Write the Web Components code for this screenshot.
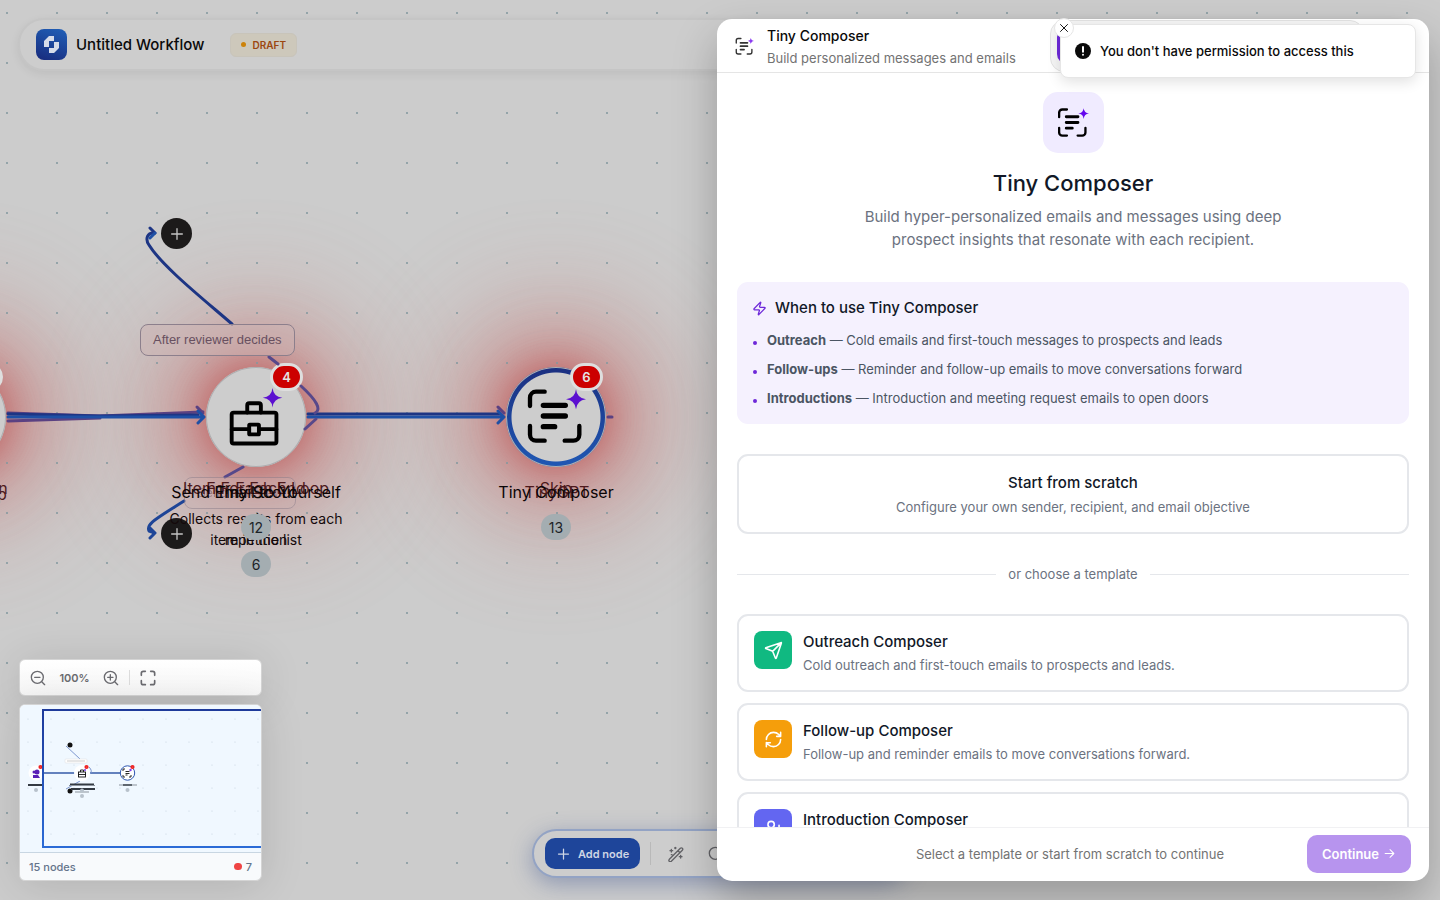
<!DOCTYPE html>
<html lang="en">
<head>
<meta charset="utf-8">
<title>Untitled Workflow</title>
<style>
    body {
        margin: 0;
        font-family: Inter, "Liberation Sans", sans-serif;
        color: #0a0a0a;
        background: #cccccc;
    }
</style>
</head>
<body>
<app-shell>
    <workflow-canvas></workflow-canvas>
    <workflow-header>Untitled Workflow<span slot="status">DRAFT</span></workflow-header>
    <canvas-overview></canvas-overview>
    <node-toolbar></node-toolbar>
    <composer-panel>
        <span slot="title">Tiny Composer</span>
        <span slot="subtitle">Build personalized messages and emails</span>
        <composer-intro></composer-intro>
        <usage-box>
            <usage-item><b>Outreach</b> — Cold emails and first-touch messages to prospects and leads</usage-item>
            <usage-item><b>Follow-ups</b> — Reminder and follow-up emails to move conversations forward</usage-item>
            <usage-item><b>Introductions</b> — Introduction and meeting request emails to open doors</usage-item>
        </usage-box>
        <scratch-card></scratch-card>
        <text-divider>or choose a template</text-divider>
        <template-list>
            <template-card icon="send" style="--tile: #10b981">Outreach Composer<span slot="text">Cold outreach and first-touch emails to prospects and leads.</span></template-card>
            <template-card icon="refresh" style="--tile: #f59e0b">Follow-up Composer<span slot="text">Follow-up and reminder emails to move conversations forward.</span></template-card>
            <template-card icon="user-plus" style="--tile: #6366f1">Introduction Composer<span slot="text">Introduction and meeting request emails.</span></template-card>
        </template-list>
    </composer-panel>
    <toast-message>You don't have permission to access this</toast-message>
</app-shell>

<script>
const star = (x, y, r) => `<path fill="var(--star, #5b0fd0)" stroke="none" d="M${x} ${y - r}q${r * .1} ${r * .9} ${r} ${r}q${-r * .9} ${r * .1} ${-r} ${r}q${-r * .1} ${-r * .9} ${-r} ${-r}q${r * .9} ${-r * .1} ${r} ${-r}z"/>`;

// name: [viewBox, stroke width, markup]
const icons = {
    compose: ['0 0 180 170', 13, `<path d="M12 52V27a18 18 0 0 1 18-18h26M12 112v26a18 18 0 0 0 18 18h26M116 156h26a18 18 0 0 0 18-18v-26"/><path stroke-width="16" d="M52 50h66M52 82h66M52 114h34"/>${star(150, 32, 30)}`],
    briefcase: ['0 0 170 185', 12, `<rect x="10" y="79" width="138" height="95" rx="6"/><path d="M58 79V56q0-6 6-6h30q6 0 6 6v23M10 130h54M94 130h54"/><rect x="64" y="116" width="30" height="30" rx="2"/>${star(136, 33, 30)}`],
    plus: ['0 0 24 24', 2, '<path d="M4 12h16M12 4v16"/>'],
    close: ['0 0 24 24', 2, '<path d="M5 5l14 14M19 5L5 19"/>'],
    arrow: ['0 0 24 24', 2, '<path d="M4 12h16M13 5l7 7-7 7"/>'],
    bolt: ['0 0 24 24', 2, '<path d="M4 14a1 1 0 0 1-.8-1.6l9.9-10.2a.5.5 0 0 1 .9.5l-1.9 6A1 1 0 0 0 13 10h7a1 1 0 0 1 .8 1.6l-9.9 10.2a.5.5 0 0 1-.9-.5l1.9-6A1 1 0 0 0 11 14z"/>'],
    send: ['0 0 24 24', 2, '<path d="M14.5 21.7a.5.5 0 0 0 .9 0l6.5-19a.5.5 0 0 0-.6-.6l-19 6.5a.5.5 0 0 0 0 .9l8 3.2a2 2 0 0 1 1 1.1zM21.9 2.1l-11 11"/>'],
    refresh: ['0 0 24 24', 2, '<path d="M3 12a9 9 0 0 1 9-9 9.75 9.75 0 0 1 6.74 2.74L21 8M21 3v5h-5M21 12a9 9 0 0 1-9 9 9.75 9.75 0 0 1-6.74-2.74L3 16M8 16H3v5"/>'],
    'user-plus': ['0 0 24 24', 2, '<path d="M16 21v-2a4 4 0 0 0-4-4H6a4 4 0 0 0-4 4v2M19 8v6M22 11h-6"/><circle cx="9" cy="7" r="4"/>'],
    'zoom-out': ['0 0 24 24', 2, '<circle cx="11" cy="11" r="9"/><path d="M22 22l-4-4M7 11h8"/>'],
    'zoom-in': ['0 0 24 24', 2, '<circle cx="11" cy="11" r="9"/><path d="M22 22l-4-4M7 11h8M11 7v8"/>'],
    fit: ['0 0 24 24', 2.5, '<path d="M2 8V5a3 3 0 0 1 3-3h3M16 2h3a3 3 0 0 1 3 3v3M22 16v3a3 3 0 0 1-3 3h-3M8 22H5a3 3 0 0 1-3-3v-3"/>'],
    wand: ['0 0 24 24', 2, '<path d="M2 20L18.5 3.500q1.500-1.500 3 0t0 3L5 23q-1.500 1-3 0t0-3zM15 7l3 3M5 5v4M3 7h4M11 2v2M10 3h2M19 14v4M17 16h4M5 13h1"/>'],
    search: ['0 0 24 24', 2, '<circle cx="11" cy="11" r="9"/><path d="M22 22l-4-4"/>'],
    alert: ['0 0 24 24', 3, '<circle cx="12" cy="12" r="12" fill="currentColor" stroke="none"/><path stroke="#fff" d="M12 6v7M12 17.5v.1"/>'],
};

function define(name, html, setup) {
    const template = document.createElement('template');
    template.innerHTML = html;
    customElements.define(name, class extends HTMLElement {
        constructor() {
            super();
            this.attachShadow({ mode: 'open' }).appendChild(template.content.cloneNode(true));
        }
        connectedCallback() {
            if (setup) setup(this, this.shadowRoot);
        }
    });
}

define('ui-icon', `
<style>
    :host { display: block; flex: none; width: 16px; height: 16px; }
    svg { display: block; width: 100%; height: 100%; }
</style>
<svg fill="none" stroke="currentColor" stroke-linecap="round" stroke-linejoin="round" aria-hidden="true"></svg>
`, (el, root) => {
    const [box, width, markup] = icons[el.getAttribute('name')];
    const svg = root.querySelector('svg');
    svg.setAttribute('viewBox', box);
    svg.setAttribute('stroke-width', width);
    svg.innerHTML = markup;
});

// every layer shares one grid cell
define('app-shell', `
<style>
    :host { display: grid; grid-template: minmax(0, 1fr) / minmax(0, 1fr); height: 100vh; overflow: hidden; position: relative; }
    ::slotted(*) { grid-area: 1 / 1; }
</style>
<slot></slot>
`);

define('workflow-header', `
<style>
    :host {
        display: flex; align-items: center; align-self: start; position: relative;
        box-sizing: border-box; height: 53px; margin: 18px; padding: 0 16px;
        border: 2px solid #c5c5c5; border-radius: 26px; background: #cdcdcd;
        box-shadow: 0 3px 10px rgba(0, 0, 0, .07);
        font-size: 15px; font-weight: 500;
    }
    .logo {
        display: grid; place-items: center; width: 31px; height: 31px; margin-right: 9px;
        border-radius: 8px; background: linear-gradient(20deg, #182a7c, #2060b8);
    }
    .status {
        display: flex; align-items: center; gap: 6px; margin-left: 26px; padding: 0 10px; height: 22px;
        border: 1px solid #c8c4ba; border-radius: 6px; background: #cdc8bb; color: #9c4711; font-size: 10px; font-weight: 600;
    }
    i { width: 5px; height: 5px; border-radius: 50%; background: #cc820a; }
</style>
<div class="logo">
    <svg width="15" height="17" viewBox="0 0 15 17" fill="#d6dcea"><path d="M5 0h5v5H5v6H0V5zM10 6h5v6l-5 5H5v-5h5z"/></svg>
</div>
<slot></slot>
<div class="status"><i></i><slot name="status"></slot></div>
`);

define('flow-node', `
<style>
    :host {
        position: absolute; display: grid; place-items: center;
        width: 100px; height: 100px; border-radius: 50%; background: #cdcdcd; color: #000;
        box-shadow: inset 0 0 0 1px #aeaeb0, 0 0 30px 6px rgba(185, 60, 60, .4), 0 0 60px 34px rgba(195, 70, 70, .32), 0 0 90px 82px rgba(200, 110, 105, .24);
    }
    :host([selected]) { background: radial-gradient(circle closest-side, #cdcdcd 88%, transparent 90%), linear-gradient(#1b2f80, #1f58b4); }
    .badge {
        position: absolute; left: 64px; top: -4px; display: grid; place-items: center; box-sizing: border-box;
        width: 33px; height: 28px; border: 3px solid #dedede; border-radius: 14px;
        background: #cc0000; color: #e4e4e4; font-size: 13px; font-weight: 600;
    }
</style>
<div class="icon"></div>
<div class="badge"><slot></slot></div>
`, (el, root) => {
    root.querySelector('.icon').innerHTML = `<ui-icon name="${el.getAttribute('icon')}" style="width: 60px; height: 60px"></ui-icon>`;
});

define('workflow-canvas', `
<style>
    :host { display: block; position: relative; overflow: hidden; background: #cccccc; }
    .dots, .edges { position: absolute; left: 0; top: 0; width: 100%; height: 100%; }
    .name, .note, .count { position: absolute; white-space: nowrap; transform: translate(-50%, -50%); }
    .name { font-size: 16px; color: #0a0506; }
    .note { font-size: 14px; color: #14090b; text-align: center; line-height: 21px; }
    .under { color: #4d191c; }
    .count { display: grid; place-items: center; width: 30px; height: 26px; border-radius: 13px; background: #a4adb1; color: #1d2328; font-size: 14px; }
    .add {
        position: absolute; display: grid; place-items: center; width: 31px; height: 31px; padding: 0;
        border: 0; border-radius: 50%; background: #1c1a1a; color: #c4c4c4;
    }
    .branch {
        position: absolute; box-sizing: border-box; height: 32px; padding: 0 12px;
        border: 1px solid #8c7f8c; border-radius: 8px; background: rgba(204, 180, 180, .5);
        color: #685060; font: 13px/30px "Liberation Sans", sans-serif; white-space: nowrap;
    }
    .faded { opacity: .5; }
</style>
<flow-node icon="compose" style="left: -94px; top: 367px"></flow-node>
<flow-node icon="briefcase" style="left: 206px; top: 367px">4</flow-node>
<flow-node icon="compose" selected style="left: 506px; top: 367px">6</flow-node>
<svg class="dots">
    <!-- the second row of circles is skipped where a node covers the grid -->
    <pattern id="dots" width="50" height="50" patternUnits="userSpaceOnUse"><circle cx="7" cy="13" r="1" fill="#82979e"/></pattern>
    <mask id="free"><rect width="100%" height="100%" fill="#fff"/><circle cx="-44" cy="417" r="51"/><circle cx="256" cy="417" r="51"/><circle cx="556" cy="417" r="51"/></mask>
    <rect width="100%" height="100%" fill="url(#dots)" mask="url(#free)"/>
</svg>
<svg class="edges" fill="none" stroke-width="3" stroke-linecap="round" stroke-linejoin="round">
    <path stroke="#5a4182" d="M8 421L100 418M8 413l92 3 103-4M197 407l6 6"/>
    <path stroke="#1d3584" d="M8 414l90 2 100-1M308 414h192"/>
    <path stroke="#1e50a5" d="M8 417h194M198 411l6 6-6 6M308 417h194M498 411l6 6-6 6"/>
    <path stroke="#5a4182" d="M498 407l6 6M608 417h4"/>
    <path stroke="#1d3584" d="M155 233c-8-1-10 6-6 12 13 21 53 53 83 79M150 228l5 5"/>
    <path stroke="#1e50a5" d="M155 233l-5 5"/>
    <path stroke="#57488a" d="M269 357l9 7M301 386q24 22 14 27M316 419l-11 10M243 467l-18 10"/>
    <path stroke="#1e4597" d="M184 501c-30 19-38 23-35 30l6 2M150 528l5 5-5 5"/>
</svg>
<span class="branch" style="left: 140px; top: 324px">After reviewer decides</span>
<span class="branch faded" style="left: 184px; top: 477px">Send to review</span>
<span class="name under" style="left: 256px; top: 488px">Item For Each Loop</span>
<span class="name under" style="left: 256px; top: 488px">For Each End</span>
<span class="name" style="left: 256px; top: 492px">Tiny Scout</span>
<span class="name" style="left: 256px; top: 492px">Send Email to Yourself</span>
<button class="add" aria-label="Add after approval" style="left: 161px; top: 218px"><ui-icon name="plus"></ui-icon></button>
<button class="add" aria-label="Add after rejection" style="left: 161px; top: 518px"><ui-icon name="plus"></ui-icon></button>
<span class="note" style="left: 256px; top: 529px">Collects results from each<br>item in the list</span>
<span class="note" style="left: 256px; top: 539px">repetition</span>
<span class="count" style="left: 256px; top: 527px">12</span>
<span class="count" style="left: 256px; top: 564px">6</span>
<span class="name under" style="left: 556px; top: 488px">Skip</span>
<span class="name under" style="left: 557px; top: 492px">TinyGPT</span>
<span class="name" style="left: 556px; top: 492px">Tiny Composer</span>
<span class="count" style="left: 556px; top: 527px">13</span>
<span class="name under" style="left: 3px; top: 488px">n</span>
<span class="name under" style="left: 2px; top: 494px">p</span>
`);

define('canvas-overview', `
<style>
    :host { display: flex; flex-direction: column; gap: 8px; width: 243px; align-self: end; margin: 0 0 19px 19px; position: relative; font-size: 11px; }
    .zoom, .map { box-sizing: border-box; border: 1px solid #d4d4d4; border-radius: 6px; box-shadow: 0 4px 44px rgba(0, 0, 0, .13); }
    .zoom { display: flex; align-items: center; height: 37px; padding: 0 10px; background: linear-gradient(#ffffff, #f6f6f6); color: #6b6b70; font-weight: 600; }
    .zoom button { display: block; padding: 0; border: 0; background: none; color: inherit; }
    .zoom output { width: 57px; text-align: center; }
    .zoom hr { width: 1px; height: 15px; margin: 0 10px; border: 0; background: #dddddd; }
    .map { overflow: hidden; background: #f8fafc; }
    .map svg { display: block; width: 100%; height: 147px; background: #f0f8ff; border-bottom: 1px solid #c8d6e2; }
    footer { display: flex; align-items: center; gap: 4px; height: 27px; padding: 0 9px; color: #64748b; font-weight: 500; }
    footer i { width: 8px; height: 7px; margin-left: auto; border-radius: 4px; background: #ef4444; }
</style>
<div class="zoom">
    <button aria-label="Zoom out"><ui-icon name="zoom-out"></ui-icon></button>
    <output>100%</output>
    <button aria-label="Zoom in"><ui-icon name="zoom-in"></ui-icon></button>
    <hr>
    <button aria-label="Fit view"><ui-icon name="fit"></ui-icon></button>
</div>
<div class="map">
    <svg viewBox="0 0 241 147" preserveAspectRatio="xMinYMin slice" fill="none">
        <defs>
            <pattern id="dots" width="23" height="23" patternUnits="userSpaceOnUse"><circle cx="8" cy="14" r=".6" fill="#c3d0dc"/></pattern>
            <linearGradient id="frame" x1="0" y1="0" x2="0" y2="1"><stop stop-color="#1e3a9a"/><stop offset="1" stop-color="#2b6bd6"/></linearGradient>
        </defs>
        <rect width="241" height="147" fill="url(#dots)"/>
        <path stroke="#3559a8" stroke-width="1.5" d="M22 68h33M70 68h31"/>
        <path stroke="#7d97cf" d="M46 41l14 13M69 62q4 4 1 7M60 76l-14 8"/>
        <rect x="45" y="54" width="22" height="4" rx="1" fill="#fff" stroke="#ddd" stroke-width=".5"/><path stroke="#999" stroke-width=".5" d="M47 56h18"/>
        <circle cx="16" cy="68" r="7.5" fill="#fff"/><circle cx="62" cy="68" r="8" fill="#fff"/>
        <circle cx="107.5" cy="68" r="7.2" fill="#fff" stroke="#2c55b0"/>
        <g fill="#5b21b6"><circle cx="14" cy="67" r="1.5"/><circle cx="17" cy="67" r="2.5"/><path d="M13 70h5l2 3h-7z"/></g>
        <g stroke="#111" stroke-width=".9"><rect x="58.5" y="67" width="7" height="5"/><path d="M60.5 67v-2h3v2M58 69.5h8M103 66v-2h2M103 70v2h2M109 72h2v-2M105.5 66.5h4M105.5 68.5h4M105.5 70h2"/></g>
        <g fill="#7c3aed"><circle cx="65" cy="65" r="1"/><circle cx="110.5" cy="65" r="1.2"/></g>
        <g fill="#fff" stroke="#ee2222" stroke-width="1.8"><circle cx="20.5" cy="62" r="1.2"/><circle cx="66.5" cy="62" r="1.2"/><circle cx="112.5" cy="62" r="1.2"/></g>
        <g fill="#111"><circle cx="50" cy="40" r="2.5"/><circle cx="50" cy="86" r="2.5"/></g>
        <path stroke="#333a42" stroke-width="1.8" d="M8 80h15M50 79.5h24M51 84h24M103 80h9"/>
        <path stroke="#8b939c" d="M99 80h18M55 87h14M49 80.5h26"/>
        <g fill="#b8c2cc"><circle cx="16" cy="85" r="2"/><circle cx="62" cy="85.5" r="2"/><circle cx="62" cy="91" r="2"/><circle cx="107.5" cy="85" r="2"/></g>
        <rect x="23" y="5" width="240" height="137" stroke="url(#frame)" stroke-width="2"/>
    </svg>
    <footer>15 nodes<i></i>7</footer>
</div>
`);

define('node-toolbar', `
<style>
    :host {
        display: flex; align-items: center; align-self: end; justify-self: center; position: relative;
        box-sizing: border-box; width: 376px; height: 49px; margin-bottom: 22px; padding: 0 11px;
        border: 2px solid #93a3c4; border-radius: 25px; background: #cdcdcd; color: #626266;
        box-shadow: 0 6px 22px rgba(50, 75, 140, .4);
    }
    button { display: flex; align-items: center; padding: 0; border: 0; background: none; color: inherit; font: inherit; }
    .add { gap: 7px; height: 31px; padding: 0 11px; border-radius: 10px; background: #1e459a; color: #cfd6e5; font-size: 11px; font-weight: 600; }
    .add ui-icon { width: 15px; }
    hr { width: 1px; height: 23px; margin: 0 17px 0 10px; border: 0; background: #b9b9b9; }
    .tool { margin-right: 24px; }
</style>
<button class="add"><ui-icon name="plus"></ui-icon>Add node</button>
<hr>
<button class="tool" aria-label="Tidy up"><ui-icon name="wand"></ui-icon></button>
<button class="tool" aria-label="Search"><ui-icon name="search"></ui-icon></button>
`);

define('composer-panel', `
<style>
    :host {
        display: flex; flex-direction: column; justify-self: end; position: relative; overflow: hidden;
        box-sizing: border-box; width: calc(50vw - 8px); margin: 19px 11px 19px 0;
        border-radius: 15px; background: #ffffff;
        box-shadow: 0 20px 44px rgba(0, 0, 0, .25);
    }
    header { display: flex; align-items: center; flex: none; box-sizing: border-box; height: 54px; padding: 2px 18px 0; gap: 13px; border-bottom: 1px solid #e5e5e5; }
    header ui-icon { width: 19px; height: 19px; color: #333333; --star: #8b3cf0; }
    h1 { margin: 0; font-size: 14px; line-height: 22px; font-weight: 500; }
    p { margin: 0; font-size: 13px; line-height: 22px; color: #737373; }
    main { flex: 1; min-height: 0; overflow: hidden; padding: 19px 20px 0; }
    .tabs {
        position: absolute; left: 333px; right: 65px; top: 1px; box-sizing: border-box; height: 52px; padding: 6px;
        border: 1px solid #e2e2e2; border-radius: 14px; background: #f5f5f5;
    }
    .tabs button { display: block; width: 90px; height: 37px; border: 0; border-radius: 10px; background: #6d28d9; }
    footer { display: flex; align-items: center; flex: none; box-sizing: border-box; height: 54px; padding: 0 18px 2px; border-top: 1px solid #f1f1f3; }
    footer p { flex: 1; padding-left: 98px; text-align: center; }
    footer button {
        display: flex; align-items: center; gap: 4px; height: 38px; padding: 0 15px; border: 0; border-radius: 10px;
        background: #b794ee; color: #ffffff; font: inherit; font-size: 13px; font-weight: 600;
    }
    footer ui-icon { width: 13px; height: 13px; }
</style>
<header>
    <ui-icon name="compose"></ui-icon>
    <div><h1><slot name="title"></slot></h1><p><slot name="subtitle"></slot></p></div>
</header>
<main><slot></slot></main>
<footer>
    <p>Select a template or start from scratch to continue</p>
    <button disabled>Continue <ui-icon name="arrow"></ui-icon></button>
</footer>
<div class="tabs"><button aria-label="Setup"></button></div>
`);

define('composer-intro', `
<style>
    :host { display: flex; flex-direction: column; align-items: center; margin-bottom: 31px; text-align: center; }
    .tile { display: grid; place-items: center; width: 61px; height: 61px; border-radius: 15px; background: #f0ebff; --star: #6407ee; }
    ui-icon { width: 32px; height: 32px; color: #000; }
    h2 { margin: 15px 0 7px; font-size: 22px; line-height: 30px; font-weight: 500; color: #111827; }
    p { max-width: 430px; margin: 0; font-size: 15px; line-height: 23px; color: #6b7280; }
</style>
<div class="tile"><ui-icon name="compose"></ui-icon></div>
<h2>Tiny Composer</h2>
<p>Build hyper-personalized emails and messages using deep prospect insights that resonate with each recipient.</p>
`);

define('usage-box', `
<style>
    :host { display: block; padding: 15px; margin-bottom: 30px; border-radius: 11px; background: #f5f1fe; }
    h3 { display: flex; align-items: center; gap: 8px; margin: 0 0 10px; font-size: 15px; line-height: 22px; font-weight: 500; color: #111827; }
    ui-icon { width: 15px; height: 15px; color: #6d28d9; }
    div { display: grid; gap: 7px; }
</style>
<h3><ui-icon name="bolt"></ui-icon>When to use Tiny Composer</h3>
<div role="list"><slot></slot></div>
`);

define('usage-item', `
<style>
    :host { display: flex; align-items: center; gap: 10px; font-size: 13px; line-height: 22px; color: #4b5563; }
    ::slotted(b) { font-weight: 700; }
    i { width: 4px; height: 4px; margin: 5px 0 0 1px; border-radius: 50%; background: #6d28d9; }
</style>
<i></i><div><slot></slot></div>
`, el => el.setAttribute('role', 'listitem'));

define('scratch-card', `
<style>
    :host { display: block; }
    button { width: 100%; padding: 14px 14px 13px; border: 2px solid #e5e7eb; border-radius: 11px; background: #ffffff; font: inherit; }
    span { display: block; }
    .title { font-size: 15px; line-height: 25px; font-weight: 500; color: #111827; }
    .text { font-size: 13px; line-height: 24px; color: #6b7280; }
</style>
<button><span class="title">Start from scratch</span><span class="text">Configure your own sender, recipient, and email objective</span></button>
`);

define('text-divider', `
<style>
    :host { display: flex; align-items: center; gap: 12px; margin: 30px 0 29px; font-size: 13px; line-height: 21px; color: #6b7280; }
    :host::before, :host::after { content: ""; flex: 1; height: 1px; background: #e5e7eb; }
</style>
<slot></slot>
`);

define('template-list', `
<style>:host { display: grid; gap: 11px; }</style>
<slot></slot>
`);

define('template-card', `
<style>
    :host { display: block; }
    button {
        display: flex; align-items: flex-start; gap: 11px; width: 100%; padding: 14px 15px;
        border: 2px solid #e5e7eb; border-radius: 11px; background: #ffffff; font: inherit; text-align: left;
    }
    .tile { display: grid; place-items: center; flex: none; width: 38px; height: 38px; margin-top: 1px; border-radius: 8px; background: var(--tile); color: #ffffff; }
    .title { display: block; font-size: 15px; line-height: 24px; font-weight: 500; color: #111827; }
    .text { display: block; font-size: 13px; line-height: 22px; color: #6b7280; }
</style>
<button><span class="tile"></span><span><span class="title"><slot></slot></span><span class="text"><slot name="text"></slot></span></span></button>
`, (el, root) => {
    root.querySelector('.tile').innerHTML = `<ui-icon name="${el.getAttribute('icon')}" style="width: 19px; height: 19px"></ui-icon>`;
});

define('toast-message', `
<style>
    :host {
        position: absolute; right: 24px; top: 24px; display: flex; align-items: center; gap: 9px;
        box-sizing: border-box; width: 356px; height: 54px; padding: 0 14px;
        border: 1px solid #e6e6e6; border-radius: 8px; background: #ffffff;
        box-shadow: 0 4px 14px rgba(0, 0, 0, .12); font-size: 13px; font-weight: 500;
    }
    button {
        position: absolute; left: -7px; top: -7px; display: grid; place-items: center; width: 20px; height: 20px; padding: 0;
        border: 1px solid #e6e6e6; border-radius: 50%; background: #ffffff; color: #171717;
    }
    button ui-icon { width: 12px; height: 12px; }
</style>
<button aria-label="Close"><ui-icon name="close"></ui-icon></button>
<ui-icon name="alert"></ui-icon>
<slot></slot>
`);
</script>
</body>
</html>
